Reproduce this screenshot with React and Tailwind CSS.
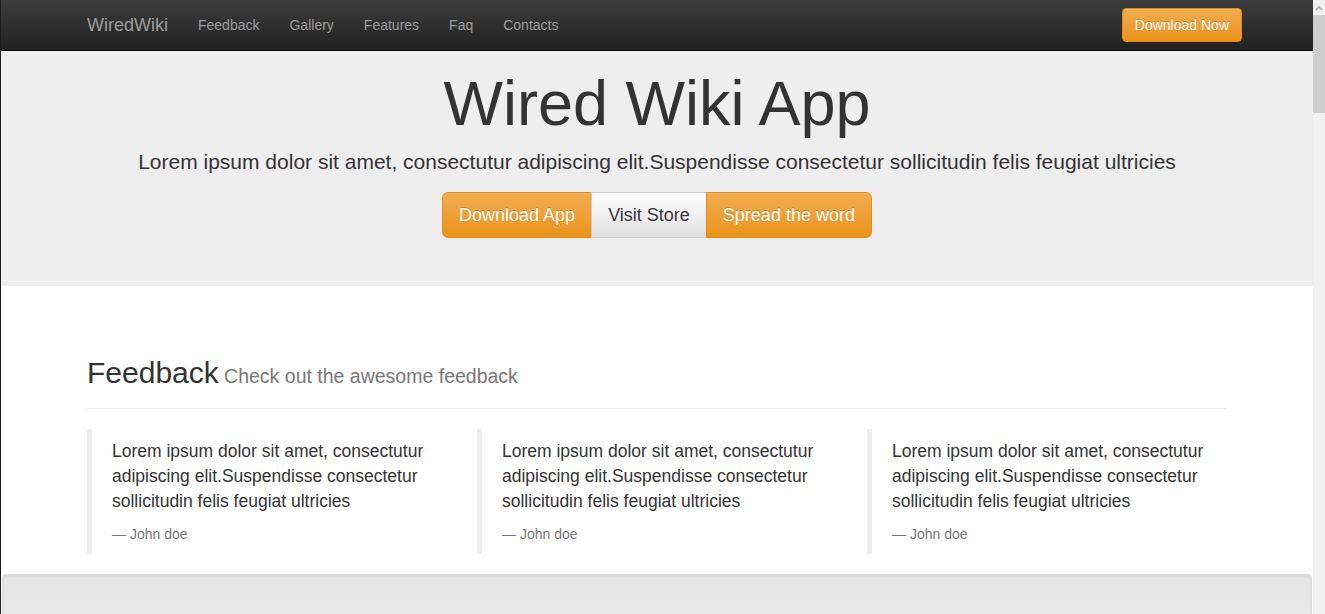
import React from 'react';

const navLinks = ['Feedback', 'Gallery', 'Features', 'Faq', 'Contacts'];

const quote =
  'Lorem ipsum dolor sit amet, consectutur adipiscing elit.Suspendisse consectetur sollicitudin felis feugiat ultricies';

const Navbar = () => (
  <nav className="h-[51px] bg-gradient-to-b from-[#3c3c3c] to-[#222] border-b border-[#080808]">
    <div className="w-[1170px] mx-auto px-[15px] h-[50px] flex items-center">
      <a className="text-[18px] leading-[20px] text-[#9d9d9d] pr-[15px]">WiredWiki</a>
      <ul className="flex">
        {navLinks.map((l) => (
          <li key={l}>
            <a className="block px-[15px] text-[14px] leading-[20px] text-[#9d9d9d]">{l}</a>
          </li>
        ))}
      </ul>
      <button className="ml-auto -mr-[15px] h-[34px] px-[12px] rounded-[4px] border border-[#e38d13] bg-gradient-to-b from-[#f0ad4e] to-[#eb9316] text-white text-[14px] [text-shadow:0_-1px_0_rgba(0,0,0,0.2)] shadow-[inset_0_1px_0_rgba(255,255,255,0.15),0_1px_1px_rgba(0,0,0,0.075)]">
        Download Now
      </button>
    </div>
  </nav>
);

const Jumbotron = () => (
  <section className="bg-[#eee] pb-[48px] text-center text-[#333]">
    <h1 className="pt-[18px] text-[63px] leading-[69px] mb-[9px]">Wired Wiki App</h1>
    <p className="text-[21px] leading-[30px] mb-[15px]">
      Lorem ipsum dolor sit amet, consectutur adipiscing elit.Suspendisse consectetur sollicitudin felis feugiat ultricies
    </p>
    <div className="inline-flex h-[46px] text-[18px]">
      <button className="px-[16px] rounded-l-[6px] border border-[#e38d13] bg-gradient-to-b from-[#f0ad4e] to-[#eb9316] text-white [text-shadow:0_-1px_0_rgba(0,0,0,0.2)] shadow-[inset_0_1px_0_rgba(255,255,255,0.15)]">
        Download App
      </button>
      <button className="px-[16px] -ml-px border border-[#ccc] bg-gradient-to-b from-white to-[#e0e0e0] text-[#333] [text-shadow:0_1px_0_#fff]">
        Visit Store
      </button>
      <button className="px-[16px] -ml-px rounded-r-[6px] border border-[#e38d13] bg-gradient-to-b from-[#f0ad4e] to-[#eb9316] text-white [text-shadow:0_-1px_0_rgba(0,0,0,0.2)] shadow-[inset_0_1px_0_rgba(255,255,255,0.15)]">
        Spread the word
      </button>
    </div>
  </section>
);

const Feedback = () => (
  <section className="bg-white">
    <div className="w-[1170px] mx-auto px-[15px] pt-[70px]">
      <div className="border-b border-[#eee] pb-[9px] mb-[20px]">
        <h2 className="text-[30px] leading-[33px] text-[#333] mb-[6px]">
          Feedback <small className="-ml-[3px] text-[19.5px] text-[#777]">Check out the awesome feedback</small>
        </h2>
      </div>
      <div className="flex -mx-[15px]">
        {[0, 1, 2].map((i) => (
          <div key={i} className="w-[390px] px-[15px]">
            <blockquote className="border-l-[5px] border-[#eee] py-[10px] px-[20px] mb-[20px]">
              <p className="text-[17.5px] leading-[25px] text-[#333] mb-[10px]">{quote}</p>
              <footer className="text-[14px] leading-[20px] text-[#777]">— John doe</footer>
            </blockquote>
          </div>
        ))}
      </div>
    </div>
    <div className="mx-px h-[60px] rounded-[4px] border border-[#dcdcdc] bg-gradient-to-b from-[#e4e4e4] to-[#ebebeb] shadow-[inset_0_1px_3px_rgba(0,0,0,0.08)]" />
  </section>
);

const Scrollbar = () => (
  <div className="w-[12px] bg-[#f1f1f1] flex flex-col shrink-0">
    <div className="h-[15px] flex items-center justify-center">
      <svg width="8" height="6" viewBox="0 0 8 6">
        <path d="M1 5 L4 2 L7 5" fill="none" stroke="#a3a3a3" strokeWidth="1.6" />
      </svg>
    </div>
    <div className="h-[98px] bg-[#cdcdcd]" />
  </div>
);

export default function App() {
  return (
    <div className="h-[614px] w-[1325px] overflow-hidden flex font-['Liberation_Sans',Arial,sans-serif]">
      <div className="w-px bg-[#1c1c1c] shrink-0" />
      <main className="w-[1312px] shrink-0">
        <Navbar />
        <Jumbotron />
        <Feedback />
      </main>
      <Scrollbar />
    </div>
  );
}
